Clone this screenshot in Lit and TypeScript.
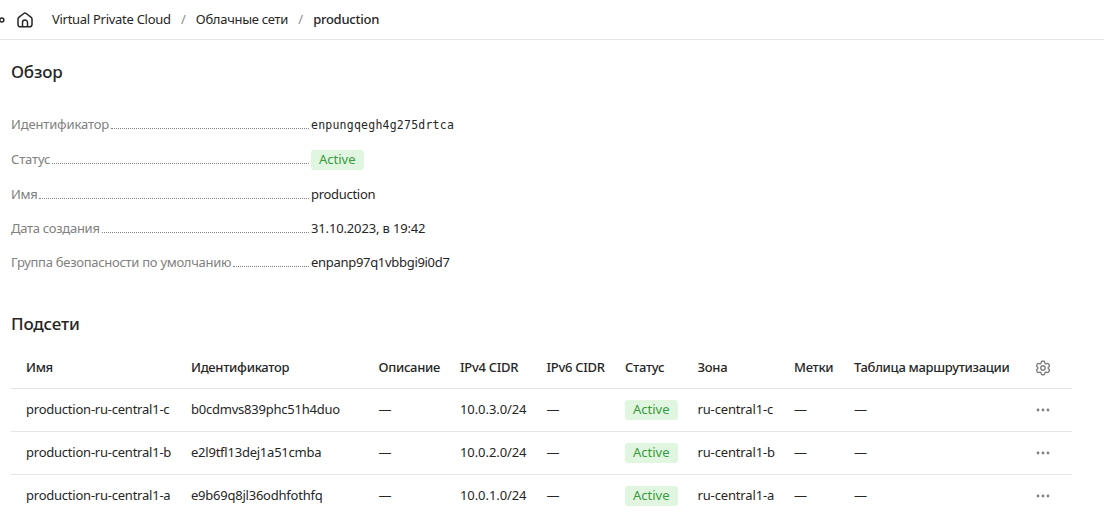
import { LitElement, html, css } from "lit";
import { customElement } from "lit/decorators.js";

interface Subnet { name: string; id: string; cidr: string; zone: string; }

const gear = html`<svg viewBox="0 0 16 16" width="16" height="16" fill="none" stroke="currentColor" stroke-width="1.4" stroke-linejoin="round"><path d="M7 1.200h2q.5 0 .7.9l.3 1.200 1.100.6 1.300-.4q.8-.2 1.100.3l.9 1.600q.3.500-.3 1.100l-.9.900v1.200l.9.900q.6.600.3 1.100l-.9 1.600q-.3.500-1.100.3l-1.300-.4-1.100.6-.3 1.200q-.2.900-.7.900H7q-.5 0-.7-.9L6 12.700l-1.100-.6-1.300.4q-.8.200-1.100-.3l-.9-1.600q-.3-.500.3-1.100l.9-.9V7.400l-.9-.9q-.6-.600-.3-1.100l.9-1.600q.3-.500 1.100-.3l1.300.4L6 3.300l.3-1.200q.2-.9.7-.9z"/><circle cx="8" cy="8" r="2.200"/></svg>`;
const dots = html`<svg viewBox="0 0 16 16" width="16" height="16" fill="currentColor"><circle cx="3" cy="8" r="1.400"/><circle cx="8" cy="8" r="1.400"/><circle cx="13" cy="8" r="1.400"/></svg>`;
const home = html`<svg class="home" viewBox="0 0 16 16" width="16" height="16" fill="none" stroke="currentColor" stroke-width="1.500" stroke-linejoin="round"><path d="M1 7a2 2 0 0 1 .8-1.600L6.800 1.500a2 2 0 0 1 2.400 0l5 3.900A2 2 0 0 1 15 7v5.500a2.300 2.300 0 0 1-2.300 2.300H3.300A2.300 2.300 0 0 1 1 12.500z"/><path d="M5.500 14.600v-4a2.500 2.500 0 0 1 5 0v4"/></svg>`;
const edge = html`<svg class="edge" viewBox="0 0 17 16" width="17" height="16" fill="none" stroke="currentColor" stroke-width="1.500"><circle cx="1.800" cy="8" r="2"/></svg>`;

@customElement("app-root")
export class AppRoot extends LitElement {
  static styles = css`
    :host { display: block; height: 524px; overflow: hidden; background: #fff; color: #262626; font: 13px/18px "Noto Sans", sans-serif; letter-spacing: -0.23px; }
    * { box-sizing: border-box; }
    svg { display: block; }
    .top { display: flex; align-items: center; height: 40px; border-bottom: 1px solid #e5e5e5; white-space: nowrap; letter-spacing: -0.28px; }
    .top span { padding-bottom: 2px; }
    .home { margin-right: 19px; }
    .top .sep { width: 25px; text-align: center; color: #8c8c8c; }
    .strong { font-weight: 500; }
    .top .strong { letter-spacing: -0.25px; }
    h2 { margin: 0; padding-left: 11px; font-size: 17px; line-height: 24px; font-weight: 500; letter-spacing: -0.18px; }
    .overview { padding-top: 20px; }
    dl { margin: 23px 0 0 11px; display: grid; grid-template-rows: 35px 35px 34px 34px 34px; }
    .row { display: flex; height: 34px; align-items: center; }
    dt { width: 300px; display: flex; color: #808080; white-space: nowrap; letter-spacing: -0.28px; }
    dt.loose { letter-spacing: -0.15px; }
    .leader { flex: 1; height: 14px; margin: 0 2px 0 2px; border-bottom: 1px dotted #808080; }
    dd { margin: 0; display: flex; letter-spacing: -0.3px; }
    .date { letter-spacing: -0.15px; }
    .mono { padding-top: 1px; font: 11.5px/18px "DejaVu Sans Mono", monospace; letter-spacing: 0.23px; }
    .badge { display: block; width: 53px; height: 20px; margin-top: 2px; line-height: 18px; padding: 0 8px; border-radius: 3px; background: #e0f6e0; color: #3a9a3f; letter-spacing: 0; }
    .subnets { padding-top: 33px; }
    .table { margin: 10px 32px 0 11px; }
    .line { display: grid; grid-template-columns: 165px 187.5px 81.5px 86.5px 78.5px 72.5px 96.5px 60px 181px 20px; padding: 0 0 2px 15px; height: 43px; align-items: center; border-bottom: 1px solid #e5e5e5; white-space: nowrap; }
    .head { padding-bottom: 0; letter-spacing: -0.3px; font-weight: 500; }
    .line:last-child { border-color: transparent; }
    .cidr { letter-spacing: -0.08px; }
    .zone { letter-spacing: -0.15px; }
    .icon { color: #808080; padding-top: 2px; }
    .head .icon { padding-top: 1px; }
  `;
  private fields = [
    ["Идентификатор", html`<span class="mono">enpungqegh4g275drtca</span>`],
    ["Статус", html`<span class="badge">Active</span>`],
    ["Имя", "production"],
    ["Дата создания", html`<span class="date">31.10.2023, в 19:42</span>`],
    ["Группа безопасности по умолчанию", "enpanp97q1vbbgi9i0d7"],
  ];
  private subnets: Subnet[] = [
    { name: "production-ru-central1-c", id: "b0cdmvs839phc51h4duo", cidr: "10.0.3.0/24", zone: "ru-central1-c" },
    { name: "production-ru-central1-b", id: "e2l9tfl13dej1a51cmba", cidr: "10.0.2.0/24", zone: "ru-central1-b" },
    { name: "production-ru-central1-a", id: "e9b69q8jl36odhfothfq", cidr: "10.0.1.0/24", zone: "ru-central1-a" },
  ];
  private heads = ["Имя", "Идентификатор", "Описание", "IPv4 CIDR", "IPv6 CIDR", "Статус", "Зона", "Метки", "Таблица маршрутизации"];
  render() {
    return html`
      <nav class="top">${edge}${home}<span>Virtual Private Cloud</span><span class="sep">/</span><span>Облачные сети</span><span class="sep">/</span><span class="strong">production</span></nav>
      <section class="overview"><h2>Обзор</h2>
        <dl>${this.fields.map(([k, v], i) => html`<div class="row"><dt class=${i < 2 ? "loose" : ""}>${k}<span class="leader"></span></dt><dd>${v}</dd></div>`)}</dl>
      </section>
      <section class="subnets"><h2>Подсети</h2>
        <div class="table">
          <div class="line head">${this.heads.map((h) => html`<span>${h}</span>`)}<span class="icon">${gear}</span></div>
          ${this.subnets.map((s) => html`<div class="line"><span>${s.name}</span><span>${s.id}</span><span>—</span><span class="cidr">${s.cidr}</span><span>—</span><span><span class="badge">Active</span></span><span class="zone">${s.zone}</span><span>—</span><span>—</span><span class="icon">${dots}</span></div>`)}
        </div>
      </section>`;
  }
}
